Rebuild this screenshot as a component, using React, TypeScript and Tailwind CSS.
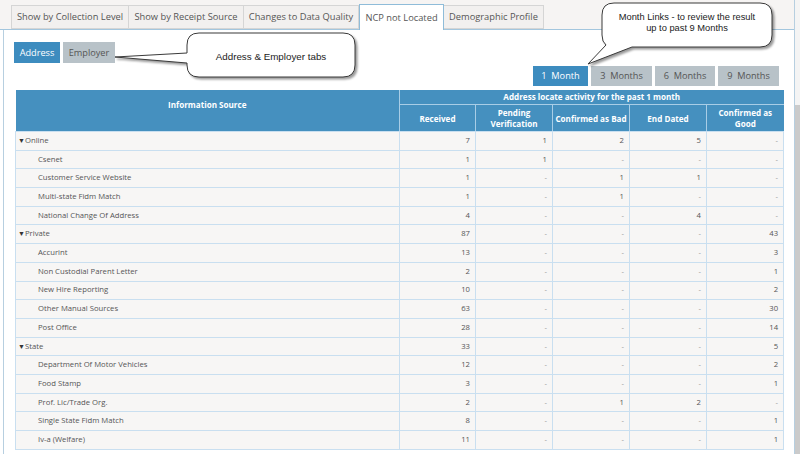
import React from "react";

type Row = { name: string; cat?: boolean; v: string[] };

const rows: Row[] = [
  { name: "Online", cat: true, v: ["7", "1", "2", "5", "-"] },
  { name: "Csenet", v: ["1", "1", "-", "-", "-"] },
  { name: "Customer Service Website", v: ["1", "-", "1", "1", "-"] },
  { name: "Multi-state Fidm Match", v: ["1", "-", "1", "-", "-"] },
  { name: "National Change Of Address", v: ["4", "-", "-", "4", "-"] },
  { name: "Private", cat: true, v: ["87", "-", "-", "-", "43"] },
  { name: "Accurint", v: ["13", "-", "-", "-", "3"] },
  { name: "Non Custodial Parent Letter", v: ["2", "-", "-", "-", "1"] },
  { name: "New Hire Reporting", v: ["10", "-", "-", "-", "2"] },
  { name: "Other Manual Sources", v: ["63", "-", "-", "-", "30"] },
  { name: "Post Office", v: ["28", "-", "-", "-", "14"] },
  { name: "State", cat: true, v: ["33", "-", "-", "-", "5"] },
  { name: "Department Of Motor Vehicles", v: ["12", "-", "-", "-", "2"] },
  { name: "Food Stamp", v: ["3", "-", "-", "-", "1"] },
  { name: "Prof. Lic/Trade Org.", v: ["2", "-", "1", "2", "-"] },
  { name: "Single State Fidm Match", v: ["8", "-", "-", "-", "1"] },
  { name: "Iv-a (Welfare)", v: ["11", "-", "-", "-", "1"] },
];

const tabs = [
  { label: "Show by Collection Level", w: "w-[118px]" },
  { label: "Show by Receipt Source", w: "w-[115px]" },
  { label: "Changes to Data Quality", w: "w-[115px]" },
  { label: "NCP not Located", w: "w-[85px]", active: true },
  { label: "Demographic Profile", w: "w-[100px]" },
];

export default function App() {
  return (
    <div className="relative w-[800px] h-[454px] overflow-hidden bg-white flex font-['Open_Sans',sans-serif] text-[#555]">
      <div className="w-[795px] h-full flex flex-col border-r border-[#b7cfe0]">
        {/* tab bar */}
        <div className="h-[30px] shrink-0 bg-[#f6f4f3] flex items-end pl-[11px] border-b border-[#a3c6de]">
          {tabs.map((t, i) =>
            t.active ? (
              <div
                key={i}
                className={`${t.w} h-[26px] -mb-px bg-white border border-b-0 border-[#8fbcd9] flex items-center justify-center text-[9.3px] text-[#555]`}
              >
                {t.label}
              </div>
            ) : (
              <div
                key={i}
                className={`${t.w} h-[24px] bg-[#f2f0ef] border border-[#d5d5d5] ${i === 0 ? "" : "border-l-0"} ${i === 4 ? "border-l-0" : ""} flex items-center justify-center text-[9.3px] text-[#555]`}
              >
                {t.label}
              </div>
            )
          )}
        </div>

        {/* panel */}
        <div className="flex-1 ml-[3px] border-l border-[#b7cfe0] bg-white pl-[10px] pr-[11px] pt-[12px] flex flex-col">
          <div className="flex gap-[3px] h-[21px]">
            <div className="w-[46px] h-full bg-[#3d8cbf] text-white text-[9.2px] flex items-center justify-center">Address</div>
            <div className="w-[52px] h-full bg-[#b8c2c8] text-[#555] text-[9.2px] flex items-center justify-center">Employer</div>
          </div>

          <div className="flex justify-end gap-[3px] h-[20px] mt-[3px] mr-[4px]">
            <div className="w-[55px] h-full bg-[#3d8cbf] text-white text-[9.2px] flex items-center justify-center whitespace-pre">1  Month</div>
            <div className="w-[61px] h-full bg-[#b8c2c8] text-[#555] text-[9.2px] flex items-center justify-center whitespace-pre">3  Months</div>
            <div className="w-[60px] h-full bg-[#b8c2c8] text-[#555] text-[9.2px] flex items-center justify-center whitespace-pre">6  Months</div>
            <div className="w-[61px] h-full bg-[#b8c2c8] text-[#555] text-[9.2px] flex items-center justify-center whitespace-pre">9  Months</div>
          </div>

          <table className="mt-[4px] ml-px table-fixed border-collapse w-[768px] text-[7.7px]">
            <colgroup>
              <col className="w-[384px]" />
              <col className="w-[76px]" />
              <col className="w-[77px]" />
              <col className="w-[77px]" />
              <col className="w-[77px]" />
              <col className="w-[77px]" />
            </colgroup>
            <thead>
              <tr className="h-[14px]">
                <th rowSpan={2} className="bg-[#4590bf] text-white text-[8.1px] font-bold align-top pt-[9px] border-r border-[#a8cde6] border-b border-b-[#c9dff0]">
                  Information Source
                </th>
                <th colSpan={5} className="bg-[#4590bf] text-white text-[8.1px] font-bold border-b border-[#a8cde6] leading-[14px]">
                  Address locate activity for the past 1 month
                </th>
              </tr>
              <tr className="h-[27px]">
                {["Received", "Pending Verification", "Confirmed as Bad", "End Dated", "Confirmed as Good"].map((h, i) => (
                  <th
                    key={i}
                    className={`bg-[#4590bf] text-white text-[8.1px] font-bold leading-[11px] ${i === 1 || i === 4 ? "px-[10px]" : "px-[1px]"} border-b border-b-[#c9dff0] ${i < 4 ? "border-r border-r-[#a8cde6]" : ""}`}
                  >
                    {h}
                  </th>
                ))}
              </tr>
            </thead>
            <tbody>
              {rows.map((r, i) => (
                <tr key={i} className="h-[18.7px]">
                  <td className="bg-[#f7f6f5] border border-[#c9dff0] text-[#555] leading-none">
                    {r.cat ? (
                      <span className="pl-[2px]">
                        <span className="text-[7px] text-[#333]">▼</span>
                        {r.name}
                      </span>
                    ) : (
                      <span className="pl-[22px]">{r.name}</span>
                    )}
                  </td>
                  {r.v.map((v, j) => (
                    <td
                      key={j}
                      className={`bg-[#f7f6f5] border border-[#c9dff0] text-right pr-[5px] leading-none ${v === "-" ? "text-[#999]" : "text-[#555]"}`}
                    >
                      {v}
                    </td>
                  ))}
                </tr>
              ))}
            </tbody>
          </table>
        </div>
      </div>

      {/* scrollbar strip */}
      <div className="w-[5px] h-full flex flex-col">
        <div className="h-[105px] bg-[#f4f4f4]" />
        <div className="flex-1 bg-[#cbcbcb]" />
      </div>

      {/* callout 1 */}
      <div className="absolute left-[110px] top-[28px] w-[255px] h-[58px]">
        <svg width="255" height="58" viewBox="110 28 255 58" className="absolute inset-0 drop-shadow-[2px_2px_1px_rgba(0,0,0,0.4)]">
          <path
            d="M199 33 H343 Q355 33 355 45 V65 Q355 77 343 77 H199 Q187 77 187 65 V63 L115 57 L187 53 V45 Q187 33 199 33 Z"
            fill="#ffffff"
            stroke="#3a3a3a"
            strokeWidth="1"
          />
        </svg>
        <div className="absolute left-[77px] top-[7px] w-[168px] h-[44px] flex items-center justify-center text-[9.8px] text-[#222] font-['Liberation_Sans',Arial,sans-serif]">
          Address &amp; Employer tabs
        </div>
      </div>

      {/* callout 2 */}
      <div className="absolute left-[580px] top-0 w-[200px] h-[70px]">
        <svg width="200" height="70" viewBox="580 0 200 70" className="absolute inset-0 drop-shadow-[2px_2px_1px_rgba(0,0,0,0.4)]">
          <path
            d="M614 3 H760 Q772 3 772 15 V35 Q772 47 760 47 H632 L588 64 L606 45 Q602 42 602 35 V15 Q602 3 614 3 Z"
            fill="#ffffff"
            stroke="#3a3a3a"
            strokeWidth="1"
          />
        </svg>
        <div className="absolute left-[22px] top-[2px] w-[170px] h-[42px] flex flex-col items-center justify-center text-[9.3px] leading-[11.5px] text-[#222] font-['Liberation_Sans',Arial,sans-serif]">
          <span>Month Links - to review the result</span>
          <span>up to past 9 Months</span>
        </div>
      </div>
    </div>
  );
}
